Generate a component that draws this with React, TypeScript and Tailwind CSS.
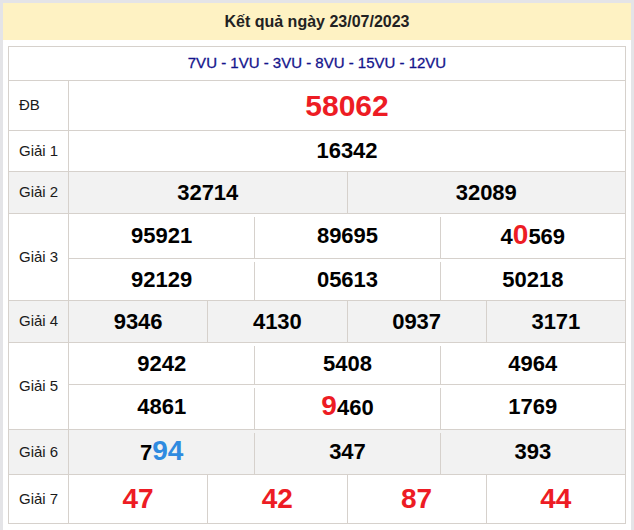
import React from "react";

const line = "border-[#d6d1cc]";

function Num({ children }: { children: React.ReactNode }) {
	return <span className="text-[22px] leading-none font-bold text-black">{children}</span>;
}

function Red({ children }: { children: React.ReactNode }) {
	return <span className="text-[28px] leading-none font-bold text-[#ed1c24]">{children}</span>;
}

function Blue({ children }: { children: React.ReactNode }) {
	return <span className="text-[28px] leading-none font-bold text-[#2f8be0]">{children}</span>;
}

function Label({ text }: { text: string }) {
	return (
		<div className={`flex w-[60px] shrink-0 items-center border-r ${line} pl-[10px] text-[15px] text-[#1a1a1a]`}>{text}</div>
	);
}

// cells of the nested 3-column tables: dividers start a few px below the row line
function ThreeCols({ items, className }: { items: React.ReactNode[]; className: string }) {
	return (
		<div className={`flex ${className}`}>
			{items.map((it, i) => (
				<div key={i} className="flex flex-1 flex-col pt-[3px]">
					<div className={`flex flex-1 items-center justify-center pb-[3px] ${i > 0 ? `border-l ${line}` : ""}`}>{it}</div>
				</div>
			))}
		</div>
	);
}

function EvenCols({ items }: { items: React.ReactNode[] }) {
	return (
		<div className="flex flex-1">
			{items.map((it, i) => (
				<div key={i} className={`flex flex-1 items-center justify-center ${i > 0 ? `border-l ${line}` : ""}`}>
					{it}
				</div>
			))}
		</div>
	);
}

export default function App() {
	return (
		<div className="h-[530px] w-[634px] overflow-hidden bg-[#e4e4e7] px-[3px] pt-[3px] font-['Liberation_Sans',Arial,sans-serif]">
			<div className="h-full bg-white">
				{/* Header */}
				<div className="flex h-[37px] items-center justify-center bg-[#fef2c3] text-[16px] font-bold text-[#222]">
					Kết quả ngày 23/07/2023
				</div>

				<div className="px-[5px] pt-[6px]">
					<div className={`border ${line}`}>
						{/* Codes */}
						<div className="flex h-[33px] items-center justify-center text-[15px] text-[#14148c] [-webkit-text-stroke:0.3px_#14148c]">
							7VU - 1VU - 3VU - 8VU - 15VU - 12VU
						</div>

						{/* ĐB */}
						<div className={`flex h-[50px] border-t ${line}`}>
							<Label text="ĐB" />
							<div className="flex flex-1 items-center justify-center">
								<span className="text-[30px] leading-none font-bold text-[#ed1c24]">58062</span>
							</div>
						</div>

						{/* Giải 1 */}
						<div className={`flex h-[41px] border-t ${line}`}>
							<Label text="Giải 1" />
							<div className="flex flex-1 items-center justify-center">
								<Num>16342</Num>
							</div>
						</div>

						{/* Giải 2 */}
						<div className={`flex h-[42px] border-t ${line} bg-[#f2f2f2]`}>
							<Label text="Giải 2" />
							<EvenCols items={[<Num>32714</Num>, <Num>32089</Num>]} />
						</div>

						{/* Giải 3 */}
						<div className={`flex h-[87px] border-t ${line}`}>
							<Label text="Giải 3" />
							<div className="flex flex-1 flex-col">
								<ThreeCols
									className="h-[44px]"
									items={[
										<Num>95921</Num>,
										<Num>89695</Num>,
										<span>
											<Num>4</Num>
											<Red>0</Red>
											<Num>569</Num>
										</span>,
									]}
								/>
								<ThreeCols
									className={`h-[42px] border-t ${line}`}
									items={[<Num>92129</Num>, <Num>05613</Num>, <Num>50218</Num>]}
								/>
							</div>
						</div>

						{/* Giải 4 */}
						<div className={`flex h-[42px] border-t ${line} bg-[#f2f2f2]`}>
							<Label text="Giải 4" />
							<EvenCols items={[<Num>9346</Num>, <Num>4130</Num>, <Num>0937</Num>, <Num>3171</Num>]} />
						</div>

						{/* Giải 5 */}
						<div className={`flex h-[87px] border-t ${line}`}>
							<Label text="Giải 5" />
							<div className="flex flex-1 flex-col">
								<ThreeCols className="h-[41px]" items={[<Num>9242</Num>, <Num>5408</Num>, <Num>4964</Num>]} />
								<ThreeCols
									className={`h-[45px] border-t ${line}`}
									items={[
										<Num>4861</Num>,
										<span>
											<Red>9</Red>
											<Num>460</Num>
										</span>,
										<Num>1769</Num>,
									]}
								/>
							</div>
						</div>

						{/* Giải 6 */}
						<div className={`flex h-[45px] border-t ${line} bg-[#f2f2f2]`}>
							<Label text="Giải 6" />
							<ThreeCols
								className="flex-1"
								items={[
									<span>
										<Num>7</Num>
										<Blue>94</Blue>
									</span>,
									<Num>347</Num>,
									<Num>393</Num>,
								]}
							/>
						</div>

						{/* Giải 7 */}
						<div className={`flex h-[49px] border-t ${line}`}>
							<Label text="Giải 7" />
							<EvenCols
								items={["47", "42", "87", "44"].map((n) => (
									<span className="text-[28px] leading-none font-bold text-[#ed1c24]">{n}</span>
								))}
							/>
						</div>
					</div>
				</div>
			</div>
		</div>
	);
}
